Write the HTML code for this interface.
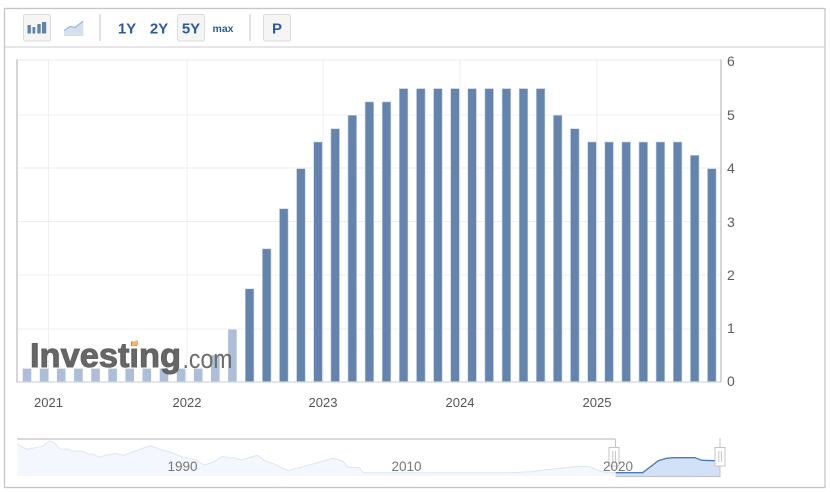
<!DOCTYPE html>
<html>
<head>
<meta charset="utf-8">
<style>
html,body{margin:0;padding:0;background:#fff;width:831px;height:492px;overflow:hidden}
svg{display:block;filter:blur(0.35px)}
text{font-family:"Liberation Sans",sans-serif}
</style>
</head>
<body>
<svg width="831" height="492" viewBox="0 0 831 492" xmlns="http://www.w3.org/2000/svg">
<rect width="831" height="492" fill="#fff"/>
<!-- outer frame -->
<rect x="4.5" y="8.5" width="820.5" height="479" fill="#fff" stroke="#c6c6c6" stroke-width="1.3"/>
<line x1="5" y1="47" x2="825" y2="47" stroke="#d6d6d6" stroke-width="1.2"/>

<!-- toolbar -->
<rect x="23.5" y="14.5" width="27" height="26.5" rx="2" fill="#f5f5f5" stroke="#dcdcdc"/>
<g fill="#5f83ae">
<rect x="27.5" y="25" width="3.4" height="8.5"/><rect x="32.5" y="27" width="2.8" height="6.5"/>
<rect x="37.3" y="24" width="3.4" height="9.5"/><rect x="42" y="22" width="4.2" height="11.5"/>
</g>
<path d="M64 30.5 L70 26.5 L75 27.5 L83.3 21 L83.3 36 L64 36 Z" fill="#d5e0ee"/>
<path d="M64 30.5 L70 26.5 L75 27.5 L83.3 21" fill="none" stroke="#9db6d3" stroke-width="1.2"/>
<line x1="100" y1="14" x2="100" y2="41" stroke="#d6d6d6" stroke-width="1.4"/>
<rect x="177.5" y="14.5" width="27" height="26.5" rx="2" fill="#f5f5f5" stroke="#dcdcdc"/>
<line x1="250" y1="14" x2="250" y2="41" stroke="#d6d6d6" stroke-width="1.4"/>
<rect x="263.5" y="14.5" width="27" height="26.5" rx="2" fill="#f5f5f5" stroke="#dcdcdc"/>
<g fill="#2d5a9b" font-weight="700" text-anchor="middle" font-size="15">
<text x="127" y="33.3">1Y</text>
<text x="159" y="33.3">2Y</text>
<text x="191" y="33.3">5Y</text>
<text x="277" y="33.3">P</text>
<text x="223" y="32" font-size="10.5">max</text>
</g>

<!-- grid -->
<g stroke="#efefef" stroke-width="1">
<line x1="17" y1="60" x2="721" y2="60" stroke-width="1.3"/>
<line x1="17" y1="115" x2="721" y2="115"/>
<line x1="17" y1="168" x2="721" y2="168"/>
<line x1="17" y1="221.5" x2="721" y2="221.5"/>
<line x1="17" y1="275" x2="721" y2="275"/>
<line x1="17" y1="329" x2="721" y2="329"/>
<line x1="48.5" y1="60" x2="48.5" y2="382"/>
<line x1="187" y1="60" x2="187" y2="382"/>
<line x1="323" y1="60" x2="323" y2="382"/>
<line x1="460" y1="60" x2="460" y2="382"/>
<line x1="597" y1="60" x2="597" y2="382"/>
</g>

<!-- faded bars -->
<g fill="#adbfd8">
<rect x="22.7" y="368.6" width="8.6" height="13.4"/>
<rect x="39.8" y="368.6" width="8.6" height="13.4"/>
<rect x="56.9" y="368.6" width="8.6" height="13.4"/>
<rect x="74.1" y="368.6" width="8.6" height="13.4"/>
<rect x="91.2" y="368.6" width="8.6" height="13.4"/>
<rect x="108.3" y="368.6" width="8.6" height="13.4"/>
<rect x="125.4" y="368.6" width="8.6" height="13.4"/>
<rect x="142.5" y="368.6" width="8.6" height="13.4"/>
<rect x="159.7" y="368.6" width="8.6" height="13.4"/>
<rect x="176.8" y="368.6" width="8.6" height="13.4"/>
<rect x="193.9" y="368.6" width="8.6" height="13.4"/>
<rect x="211" y="355.2" width="8.6" height="26.8"/>
<rect x="228.1" y="329.5" width="8.6" height="52.5"/>
</g>
<!-- bars -->
<g fill="#6484ad" stroke="#c3d1e4" stroke-width="0.6">
<rect x="245.3" y="288.8" width="8.6" height="93.2"/>
<rect x="262.4" y="248.8" width="8.6" height="133.2"/>
<rect x="279.5" y="208.7" width="8.6" height="173.3"/>
<rect x="296.6" y="168.7" width="8.6" height="213.3"/>
<rect x="313.7" y="142" width="8.6" height="240"/>
<rect x="330.9" y="128.7" width="8.6" height="253.3"/>
<rect x="348" y="115.3" width="8.6" height="266.7"/>
<rect x="365.1" y="101.9" width="8.6" height="280.1"/>
<rect x="382.2" y="101.9" width="8.6" height="280.1"/>
<rect x="399.3" y="88.6" width="8.6" height="293.4"/>
<rect x="416.5" y="88.6" width="8.6" height="293.4"/>
<rect x="433.6" y="88.6" width="8.6" height="293.4"/>
<rect x="450.7" y="88.6" width="8.6" height="293.4"/>
<rect x="467.8" y="88.6" width="8.6" height="293.4"/>
<rect x="484.9" y="88.6" width="8.6" height="293.4"/>
<rect x="502.1" y="88.6" width="8.6" height="293.4"/>
<rect x="519.2" y="88.6" width="8.6" height="293.4"/>
<rect x="536.3" y="88.6" width="8.6" height="293.4"/>
<rect x="553.4" y="115.3" width="8.6" height="266.7"/>
<rect x="570.5" y="128.7" width="8.6" height="253.3"/>
<rect x="587.7" y="142" width="8.6" height="240"/>
<rect x="604.8" y="142" width="8.6" height="240"/>
<rect x="621.9" y="142" width="8.6" height="240"/>
<rect x="639" y="142" width="8.6" height="240"/>
<rect x="656.1" y="142" width="8.6" height="240"/>
<rect x="673.3" y="142" width="8.6" height="240"/>
<rect x="690.4" y="155.3" width="8.6" height="226.7"/>
<rect x="707.5" y="168.7" width="8.6" height="213.3"/>
</g>

<!-- axes -->
<line x1="17" y1="382" x2="721" y2="382" stroke="#ccd6eb" stroke-width="1.2"/>
<line x1="17" y1="59.5" x2="17" y2="382.5" stroke="#c4c4c4" stroke-width="1.4"/>
<line x1="721" y1="59.5" x2="721" y2="382.5" stroke="#c4c4c4" stroke-width="1.4"/>

<!-- logo -->
<text x="30" y="367" font-size="34" font-weight="700" fill="#5a5a5a" fill-opacity="0.92" textLength="151" lengthAdjust="spacingAndGlyphs" stroke="#5a5a5a" stroke-opacity="0.9" stroke-width="1">Investing</text>
<path d="M132 342 L138 340 L138 345 L132 346.5 Z" fill="#f4b860"/>
<text x="182.5" y="368" font-size="27" fill="#6c6c6c" textLength="50" lengthAdjust="spacingAndGlyphs">.com</text>

<!-- axis labels -->
<g fill="#555" font-size="13" text-anchor="middle">
<text x="48.5" y="407">2021</text>
<text x="187" y="407">2022</text>
<text x="323" y="407">2023</text>
<text x="460" y="407">2024</text>
<text x="597" y="407">2025</text>
</g>
<g fill="#5c5c5c" font-size="14">
<text x="727" y="66">6</text>
<text x="727" y="120">5</text>
<text x="727" y="173">4</text>
<text x="727" y="227">3</text>
<text x="727" y="280">2</text>
<text x="727" y="333">1</text>
<text x="727" y="386">0</text>
</g>

<!-- navigator -->
<line x1="17" y1="439" x2="615.5" y2="439" stroke="#c4c4c4" stroke-width="1.2"/>
<line x1="615.5" y1="439" x2="615.5" y2="448" stroke="#c4c4c4" stroke-width="1"/>
<path d="M17.3 444.3 L26.7 449.3 L40 446.7 L43.5 445.7 L49.3 441 L53.5 442.3 L60 449 L68 449.3 L73 451.3 L81.7 451 L88 454 L93 454.3 L100 457.3 L106.7 454.7 L110.5 455 L115 453.3 L123.3 455.3 L133 452 L150 445.7 L160 449.3 L170 452 L181.7 456.7 L196.7 460.3 L204 465 L213 462.3 L222.7 456.3 L230 458.3 L233.3 457.7 L241.7 460 L257.3 455.3 L265 461 L273.3 463.7 L288.3 470.7 L333.3 458.3 L342.3 461 L348.3 467.3 L359.3 467.7 L363.3 472.7 L510 472.7 L530 471.7 L543 470 L580 466.3 L590 466.7 L601.7 471.7 L610 472.7 L615.5 472.7 L615.5 476 L17.3 476 Z" fill="#f4f8fe" stroke="none"/>
<path d="M17.3 444.3 L26.7 449.3 L40 446.7 L43.5 445.7 L49.3 441 L53.5 442.3 L60 449 L68 449.3 L73 451.3 L81.7 451 L88 454 L93 454.3 L100 457.3 L106.7 454.7 L110.5 455 L115 453.3 L123.3 455.3 L133 452 L150 445.7 L160 449.3 L170 452 L181.7 456.7 L196.7 460.3 L204 465 L213 462.3 L222.7 456.3 L230 458.3 L233.3 457.7 L241.7 460 L257.3 455.3 L265 461 L273.3 463.7 L288.3 470.7 L333.3 458.3 L342.3 461 L348.3 467.3 L359.3 467.7 L363.3 472.7 L510 472.7 L530 471.7 L543 470 L580 466.3 L590 466.7 L601.7 471.7 L615.5 472.7" fill="none" stroke="#dbe5f3" stroke-width="1"/>
<path d="M615.7 472.7 L642.7 472.7 L658.3 460.7 L666.7 458.3 L673.3 457.7 L695 457.7 L701.7 460.3 L715 460.7 L719.8 460.7 L719.8 476 L615.7 476 Z" fill="#d2e1f8"/>
<path d="M615.7 472.7 L642.7 472.7 L658.3 460.7 L666.7 458.3 L673.3 457.7 L695 457.7 L701.7 460.3 L715 460.7 L719.8 460.7" fill="none" stroke="#4a7ab5" stroke-width="1.3"/>
<line x1="615.5" y1="476.5" x2="720" y2="476.5" stroke="#c4c4c4" stroke-width="1.2"/>
<line x1="720" y1="438" x2="720" y2="477" stroke="#c4c4c4" stroke-width="1"/>

<!-- handles -->
<g fill="#fff" stroke="#c4c4c4" stroke-width="1">
<rect x="609" y="447.5" width="10" height="18.5"/>
<rect x="715" y="447.5" width="10" height="18.5"/>
</g>
<g stroke="#c4c4c4" stroke-width="1">
<line x1="612.8" y1="451" x2="612.8" y2="462"/><line x1="615.4" y1="451" x2="615.4" y2="462"/>
<line x1="718.8" y1="451" x2="718.8" y2="462"/><line x1="721.4" y1="451" x2="721.4" y2="462"/>
</g>
<g fill="#777" font-size="13.5" text-anchor="middle">
<text x="182.5" y="471">1990</text>
<text x="406.5" y="471">2010</text>
<text x="618" y="471">2020</text>
</g>
</svg>
</body>
</html>
